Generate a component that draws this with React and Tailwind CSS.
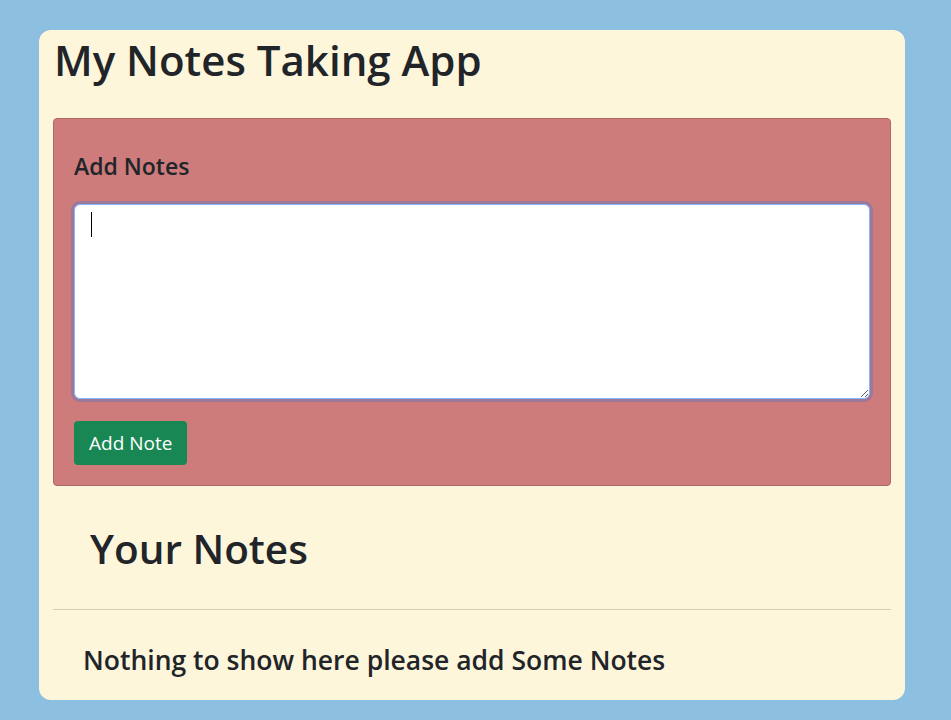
export default function App() {
  return (
    <div className="min-h-screen bg-[#8dbfe0] pt-[30px] pb-[21px] pl-[39px] pr-[46px]" style={{ fontFamily: '"Open Sans", "Noto Sans", sans-serif' }}>
      <div className="bg-[#fef6da] rounded-[12px] px-[14px] pb-[22px] text-[#212529]">
        <h1 className="text-[42px] leading-[60px] pl-[1px] font-semibold">My Notes Taking App</h1>

        <div className="mt-[28px] bg-[#cd7b7b] border border-[#b26868] rounded-[4px] px-[20px] pt-[32px] pb-[20px]">
          <h5 className="text-[23px] leading-[30px] font-semibold">Add Notes</h5>
          <div className="relative mt-[23px]">
            <textarea
              rows={6}
              className="block w-full h-[195px] bg-white border border-[#86b7fe] shadow-[0_0_0_3px_rgba(13,110,253,0.25)] rounded-[6px] px-3 py-2 outline-none caret-transparent"
            />
            <div className="absolute left-[17px] top-[8px] w-px h-[25px] bg-black" />
          </div>
          <button className="mt-[22px] bg-[#198754] text-white text-[19px] rounded-[4px] h-[44px] px-[15px]">Add Note</button>
        </div>

        <h2 className="text-[40.5px] leading-[60px] pl-[37px] mt-[33px] font-semibold">Your Notes</h2>
        <hr className="mt-[30px] border-t border-[#d8ceb2]" />
        <div className="text-[26.5px] leading-[36px] pl-[30px] mt-[32px] font-semibold">Nothing to show here please add Some Notes</div>
      </div>
    </div>
  )
}
